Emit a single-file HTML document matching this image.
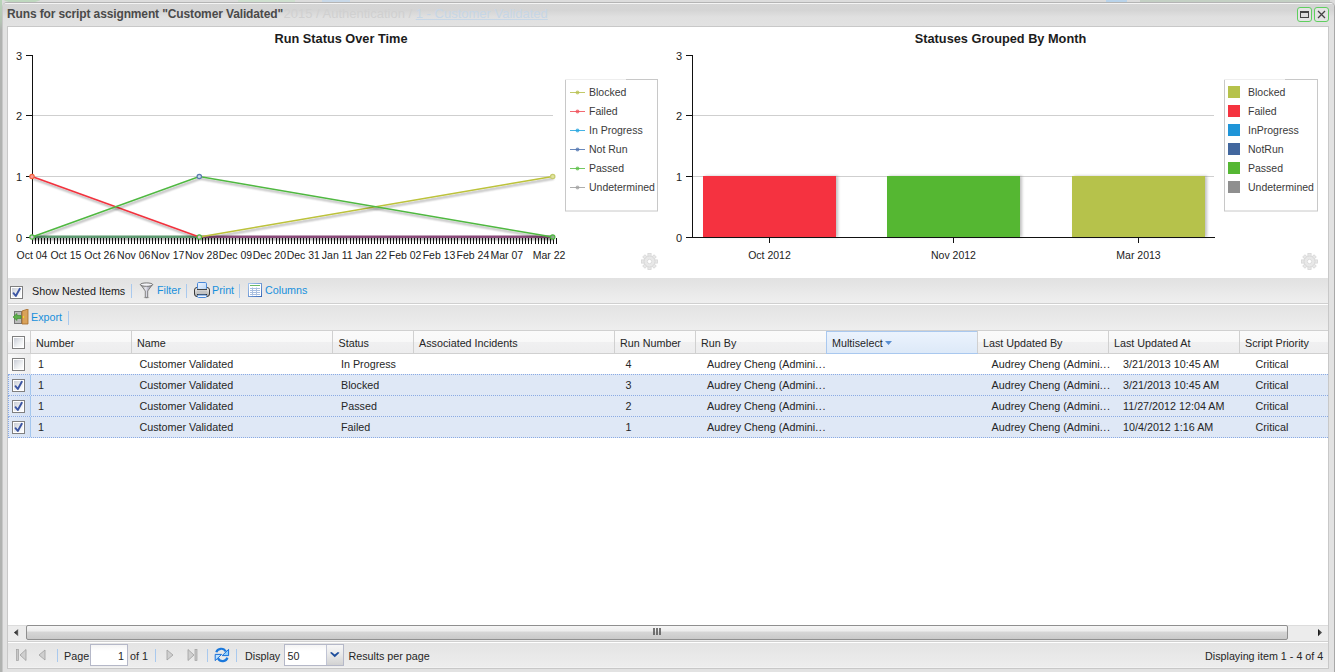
<!DOCTYPE html>
<html><head><meta charset="utf-8">
<style>
*{box-sizing:border-box;margin:0;padding:0}
html,body{width:1335px;height:672px;overflow:hidden;background:#e4e4e4;font-family:"Liberation Sans",sans-serif;font-size:11px;color:#000}
.a{position:absolute;white-space:nowrap}
#bg{left:0;top:0;width:1335px;height:672px;background:#dcdcdc}
#win{left:2px;top:2px;width:1333px;height:670px;background:#e2e2e2;border:1px solid #b4b4b4;border-left-color:#c8c8c8;border-right-color:#a8a8a8;border-bottom:0;border-radius:5px 5px 0 0}
#hdr{left:3px;top:3px;width:1331px;height:24px;background:linear-gradient(#f4f4f4 0,#f4f4f4 1px,#d5d5d5 1px,#d4d4d4 7px,#e0e0e0 14px,#e2e2e2);border-radius:4px 4px 0 0}
#title{left:7px;top:7px;font-weight:bold;font-size:12px;letter-spacing:-0.13px;color:#4a4a4a}
#ghost{left:283.5px;top:6px;font-size:13px;color:#d0d0d0}
#body{left:7px;top:26px;width:1322px;height:643px;background:#fff;border:1px solid #c8c8c8}
.tb{background:linear-gradient(#ededed,#e8e8e8)}
.sep{position:absolute;width:1px;background:#99bbe8;border-right:1px solid #fff}
.lnk{color:#1890dc}
.cb{position:absolute;width:13px;height:13px;border:1px solid #808080;background:linear-gradient(#e0e0e0,#fff)}
.cbc::after{content:"";position:absolute;left:3px;top:0px;width:4px;height:8px;border:solid #2c4fa5;border-width:0 2px 2px 0;transform:rotate(40deg)}
.hd{position:absolute;top:331px;height:22px;border-right:1px solid #d0d0d0;line-height:22px;padding-left:6px;color:#000}
.row{position:absolute;left:8px;width:1320px;height:21px}
.sel{background:#dfe8f6;border-top:1px dotted #a3bae9;border-bottom:1px dotted #a3bae9}
.c{position:absolute;line-height:21px;font-size:10.75px}
</style></head><body>
<div class="a" id="bg"></div>
<div class="a" style="left:0;top:0;width:2px;height:672px;background:#b0b2b0"></div>
<div class="a" style="left:0;top:0;width:2px;height:30px;background:linear-gradient(#b8d4b8,#b4c4b4 70%,#b0b2b0)"></div>
<div class="a" style="left:0px;top:-14px;width:44px;height:18px;border-radius:50%;background:#bfd8bf"></div>
<div class="a" style="left:238px;top:0;width:57px;height:3px;background:#cfe0cf"></div>
<div class="a" style="left:322px;top:0;width:28px;height:3px;background:#c8d8e8"></div>
<div class="a" style="left:1106px;top:0;width:21px;height:3px;background:#b9d3ea"></div>
<div class="a" style="left:1140px;top:0;width:190px;height:3px;background:#c4d0c4"></div>
<div class="a" id="win"></div>
<div class="a" id="hdr"></div>
<div class="a" id="title">Runs for script assignment "Customer Validated"</div>
<div class="a" id="ghost">2015 / Authentication / <span style="color:#c6d6e6;text-decoration:underline">1 - Customer Validated</span></div>
<!-- tool buttons -->
<div class="a" style="left:1297px;top:7px;width:15px;height:15px;border:1px solid #5fcf5f;border-radius:3px;background:#e4e4e4"></div>
<div class="a" style="left:1300px;top:11px;width:9px;height:7px;border:1px solid #444;border-top-width:2px;background:#ddd"></div>
<div class="a" style="left:1314px;top:7px;width:15px;height:15px;border:1px solid #5fcf5f;border-radius:3px;background:#e4e4e4"></div>
<svg class="a" style="left:1314px;top:7px" width="15" height="15"><path d="M4 4L11 11M11 4L4 11" stroke="#444" stroke-width="1.3"/></svg>

<div class="a" id="body"></div>
<svg class="a" id="charts" style="left:0;top:0" width="1335" height="280" font-family="Liberation Sans" font-size="11"><text x="341" y="43" text-anchor="middle" font-weight="bold" font-size="12.75" fill="#1c1c1c">Run Status Over Time</text>
<line x1="32" y1="115.5" x2="553" y2="115.5" stroke="#cfcfcf" stroke-width="1"/>
<line x1="32" y1="176.5" x2="553" y2="176.5" stroke="#cfcfcf" stroke-width="1"/>
<text x="22" y="59.5" text-anchor="end" font-size="11" fill="#222">3</text>
<line x1="26" y1="55.5" x2="32" y2="55.5" stroke="#111" stroke-width="1"/>
<text x="22" y="119.5" text-anchor="end" font-size="11" fill="#222">2</text>
<line x1="26" y1="115.5" x2="32" y2="115.5" stroke="#111" stroke-width="1"/>
<text x="22" y="180.5" text-anchor="end" font-size="11" fill="#222">1</text>
<line x1="26" y1="176.5" x2="32" y2="176.5" stroke="#111" stroke-width="1"/>
<text x="22" y="241.5" text-anchor="end" font-size="11" fill="#222">0</text>
<line x1="26" y1="237.5" x2="32" y2="237.5" stroke="#111" stroke-width="1"/>
<line x1="32.5" y1="55" x2="32.5" y2="238" stroke="#111" stroke-width="1"/>
<path d="M32.5 238V244 M35.5 238V244 M38.5 238V244 M41.5 238V244 M44.5 238V244 M47.5 238V244 M50.5 238V244 M54.5 238V244 M57.5 238V244 M60.5 238V244 M63.5 238V244 M66.5 238V244 M69.5 238V244 M72.5 238V244 M75.5 238V244 M78.5 238V244 M81.5 238V244 M84.5 238V244 M87.5 238V244 M91.5 238V244 M94.5 238V244 M97.5 238V244 M100.5 238V244 M103.5 238V244 M106.5 238V244 M109.5 238V244 M112.5 238V244 M115.5 238V244 M118.5 238V244 M121.5 238V244 M124.5 238V244 M128.5 238V244 M131.5 238V244 M134.5 238V244 M137.5 238V244 M140.5 238V244 M143.5 238V244 M146.5 238V244 M149.5 238V244 M152.5 238V244 M155.5 238V244 M158.5 238V244 M161.5 238V244 M165.5 238V244 M168.5 238V244 M171.5 238V244 M174.5 238V244 M177.5 238V244 M180.5 238V244 M183.5 238V244 M186.5 238V244 M189.5 238V244 M192.5 238V244 M195.5 238V244 M198.5 238V244 M202.5 238V244 M205.5 238V244 M208.5 238V244 M211.5 238V244 M214.5 238V244 M217.5 238V244 M220.5 238V244 M223.5 238V244 M226.5 238V244 M229.5 238V244 M232.5 238V244 M235.5 238V244 M239.5 238V244 M242.5 238V244 M245.5 238V244 M248.5 238V244 M251.5 238V244 M254.5 238V244 M257.5 238V244 M260.5 238V244 M263.5 238V244 M266.5 238V244 M269.5 238V244 M272.5 238V244 M276.5 238V244 M279.5 238V244 M282.5 238V244 M285.5 238V244 M288.5 238V244 M291.5 238V244 M294.5 238V244 M297.5 238V244 M300.5 238V244 M303.5 238V244 M306.5 238V244 M309.5 238V244 M313.5 238V244 M316.5 238V244 M319.5 238V244 M322.5 238V244 M325.5 238V244 M328.5 238V244 M331.5 238V244 M334.5 238V244 M337.5 238V244 M340.5 238V244 M343.5 238V244 M346.5 238V244 M350.5 238V244 M353.5 238V244 M356.5 238V244 M359.5 238V244 M362.5 238V244 M365.5 238V244 M368.5 238V244 M371.5 238V244 M374.5 238V244 M377.5 238V244 M380.5 238V244 M383.5 238V244 M387.5 238V244 M390.5 238V244 M393.5 238V244 M396.5 238V244 M399.5 238V244 M402.5 238V244 M405.5 238V244 M408.5 238V244 M411.5 238V244 M414.5 238V244 M417.5 238V244 M420.5 238V244 M424.5 238V244 M427.5 238V244 M430.5 238V244 M433.5 238V244 M436.5 238V244 M439.5 238V244 M442.5 238V244 M445.5 238V244 M448.5 238V244 M451.5 238V244 M454.5 238V244 M457.5 238V244 M461.5 238V244 M464.5 238V244 M467.5 238V244 M470.5 238V244 M473.5 238V244 M476.5 238V244 M479.5 238V244 M482.5 238V244 M485.5 238V244 M488.5 238V244 M491.5 238V244 M494.5 238V244 M498.5 238V244 M501.5 238V244 M504.5 238V244 M507.5 238V244 M510.5 238V244 M513.5 238V244 M516.5 238V244 M519.5 238V244 M522.5 238V244 M525.5 238V244 M528.5 238V244 M531.5 238V244 M535.5 238V244 M538.5 238V244 M541.5 238V244 M544.5 238V244 M547.5 238V244 M550.5 238V244 M553.5 238V244 M556.5 238V244" stroke="#111" stroke-width="1"/>
<text x="32.0" y="259" text-anchor="middle" font-size="10.5" fill="#222">Oct 04</text>
<text x="65.9" y="259" text-anchor="middle" font-size="10.5" fill="#222">Oct 15</text>
<text x="99.8" y="259" text-anchor="middle" font-size="10.5" fill="#222">Oct 26</text>
<text x="133.7" y="259" text-anchor="middle" font-size="10.5" fill="#222">Nov 06</text>
<text x="167.7" y="259" text-anchor="middle" font-size="10.5" fill="#222">Nov 17</text>
<text x="201.6" y="259" text-anchor="middle" font-size="10.5" fill="#222">Nov 28</text>
<text x="235.5" y="259" text-anchor="middle" font-size="10.5" fill="#222">Dec 09</text>
<text x="269.4" y="259" text-anchor="middle" font-size="10.5" fill="#222">Dec 20</text>
<text x="303.3" y="259" text-anchor="middle" font-size="10.5" fill="#222">Dec 31</text>
<text x="337.2" y="259" text-anchor="middle" font-size="10.5" fill="#222">Jan 11</text>
<text x="371.2" y="259" text-anchor="middle" font-size="10.5" fill="#222">Jan 22</text>
<text x="405.1" y="259" text-anchor="middle" font-size="10.5" fill="#222">Feb 02</text>
<text x="439.0" y="259" text-anchor="middle" font-size="10.5" fill="#222">Feb 13</text>
<text x="472.9" y="259" text-anchor="middle" font-size="10.5" fill="#222">Feb 24</text>
<text x="506.8" y="259" text-anchor="middle" font-size="10.5" fill="#222">Mar 07</text>
<text x="549" y="259" text-anchor="middle" font-size="10.5" fill="#222">Mar 22</text>
<defs><filter id="sh" filterUnits="userSpaceOnUse" x="0" y="30" width="660" height="240"><feGaussianBlur in="SourceAlpha" stdDeviation="0.9"/><feOffset dx="0.5" dy="1.6"/><feComponentTransfer><feFuncA type="linear" slope="0.4"/></feComponentTransfer><feMerge><feMergeNode/><feMergeNode in="SourceGraphic"/></feMerge></filter></defs>
<line x1="32" y1="236.8" x2="199.3" y2="236.8" stroke="#5e9a72" stroke-width="2.4" filter="url(#sh)"/>
<line x1="199.3" y1="236.8" x2="552.7" y2="236.8" stroke="#8a4c7a" stroke-width="2.4" filter="url(#sh)"/>
<polyline points="32,176.5 199.3,237" fill="none" stroke="#f2323e" stroke-width="1.5" filter="url(#sh)"/>
<polyline points="199.3,237 552.7,176.5" fill="none" stroke="#bcc23a" stroke-width="1.5" filter="url(#sh)"/>
<polyline points="32,237 199.3,176.5 552.7,237" fill="none" stroke="#4fb840" stroke-width="1.5" filter="url(#sh)"/>
<circle cx="32" cy="176.5" r="2.2" fill="#f59aa0" stroke="#f2643a" stroke-width="1.2"/>
<circle cx="32" cy="237" r="2.2" fill="#d8c8d8" stroke="#4fb840" stroke-width="1.2"/>
<circle cx="199.3" cy="176.5" r="2.2" fill="#c8d8e8" stroke="#5a7ab0" stroke-width="1.2"/>
<circle cx="199.3" cy="237" r="2.2" fill="#d8c8d8" stroke="#4fb840" stroke-width="1.2"/>
<circle cx="552.7" cy="176.5" r="2.2" fill="#e0e4a0" stroke="#c8cc70" stroke-width="1.2"/>
<circle cx="552.7" cy="237" r="2.2" fill="#90a890" stroke="#4fb840" stroke-width="1.2"/>
<rect x="565.5" y="79.5" width="92" height="131.5" fill="#fff" stroke="#c8c8c8"/><line x1="565" y1="79.5" x2="626" y2="79.5" stroke="#eeeeee"/>
<line x1="570" y1="92.5" x2="585" y2="92.5" stroke="#b8c050" stroke-width="1" opacity="0.85"/><circle cx="577.5" cy="92.5" r="1.9" fill="#b8c050" opacity="0.75"/>
<text x="589" y="95.7" font-size="10.5" fill="#3a3a3a">Blocked</text>
<line x1="570" y1="111.5" x2="585" y2="111.5" stroke="#f0505a" stroke-width="1" opacity="0.85"/><circle cx="577.5" cy="111.5" r="1.9" fill="#f0505a" opacity="0.75"/>
<text x="589" y="114.7" font-size="10.5" fill="#3a3a3a">Failed</text>
<line x1="570" y1="130.5" x2="585" y2="130.5" stroke="#25a6e0" stroke-width="1" opacity="0.85"/><circle cx="577.5" cy="130.5" r="1.9" fill="#25a6e0" opacity="0.75"/>
<text x="589" y="133.7" font-size="10.5" fill="#3a3a3a">In Progress</text>
<line x1="570" y1="149.5" x2="585" y2="149.5" stroke="#4f74b0" stroke-width="1" opacity="0.85"/><circle cx="577.5" cy="149.5" r="1.9" fill="#4f74b0" opacity="0.75"/>
<text x="589" y="152.7" font-size="10.5" fill="#3a3a3a">Not Run</text>
<line x1="570" y1="168.5" x2="585" y2="168.5" stroke="#5cbf48" stroke-width="1" opacity="0.85"/><circle cx="577.5" cy="168.5" r="1.9" fill="#5cbf48" opacity="0.75"/>
<text x="589" y="171.7" font-size="10.5" fill="#3a3a3a">Passed</text>
<line x1="570" y1="187.5" x2="585" y2="187.5" stroke="#a0a0a0" stroke-width="1" opacity="0.85"/><circle cx="577.5" cy="187.5" r="1.9" fill="#a0a0a0" opacity="0.75"/>
<text x="589" y="190.7" font-size="10.5" fill="#3a3a3a">Undetermined</text>
<text x="1000.5" y="43" text-anchor="middle" font-weight="bold" font-size="12.75" fill="#1c1c1c">Statuses Grouped By Month</text>
<line x1="692" y1="115.5" x2="1214" y2="115.5" stroke="#cfcfcf" stroke-width="1"/>
<line x1="692" y1="176.5" x2="1214" y2="176.5" stroke="#cfcfcf" stroke-width="1"/>
<text x="682" y="59.5" text-anchor="end" font-size="11" fill="#222">3</text>
<line x1="686" y1="55.5" x2="692" y2="55.5" stroke="#111" stroke-width="1"/>
<text x="682" y="119.5" text-anchor="end" font-size="11" fill="#222">2</text>
<line x1="686" y1="115.5" x2="692" y2="115.5" stroke="#111" stroke-width="1"/>
<text x="682" y="180.5" text-anchor="end" font-size="11" fill="#222">1</text>
<line x1="686" y1="176.5" x2="692" y2="176.5" stroke="#111" stroke-width="1"/>
<text x="682" y="241.5" text-anchor="end" font-size="11" fill="#222">0</text>
<line x1="686" y1="237.5" x2="692" y2="237.5" stroke="#111" stroke-width="1"/>
<defs><filter id="bs" x="-10%" y="-10%" width="120%" height="120%"><feGaussianBlur in="SourceAlpha" stdDeviation="1.5"/><feOffset dx="1.5" dy="0"/><feComponentTransfer><feFuncA type="linear" slope="0.25"/></feComponentTransfer><feMerge><feMergeNode/><feMergeNode in="SourceGraphic"/></feMerge></filter></defs>
<rect x="703" y="176" width="133" height="61" fill="#f5333f" filter="url(#bs)"/>
<rect x="887" y="176" width="133" height="61" fill="#55b733" filter="url(#bs)"/>
<rect x="1072" y="176" width="133" height="61" fill="#b6c24b" filter="url(#bs)"/>
<line x1="692.5" y1="55" x2="692.5" y2="238" stroke="#111" stroke-width="1"/>
<line x1="692" y1="237.5" x2="1215" y2="237.5" stroke="#111" stroke-width="1"/>
<line x1="769.5" y1="237" x2="769.5" y2="243" stroke="#111" stroke-width="1"/>
<text x="769.5" y="259" text-anchor="middle" font-size="10.5" fill="#222">Oct 2012</text>
<line x1="953.5" y1="237" x2="953.5" y2="243" stroke="#111" stroke-width="1"/>
<text x="953.5" y="259" text-anchor="middle" font-size="10.5" fill="#222">Nov 2012</text>
<line x1="1138.5" y1="237" x2="1138.5" y2="243" stroke="#111" stroke-width="1"/>
<text x="1138.5" y="259" text-anchor="middle" font-size="10.5" fill="#222">Mar 2013</text>
<rect x="1224.5" y="79.5" width="93" height="131.5" fill="#fff" stroke="#c8c8c8"/><line x1="1224" y1="79.5" x2="1285" y2="79.5" stroke="#eeeeee"/>
<rect x="1228" y="86" width="12" height="12" fill="#b6c24b"/>
<text x="1248" y="95.7" font-size="10.5" fill="#3a3a3a">Blocked</text>
<rect x="1228" y="105" width="12" height="12" fill="#f5333f"/>
<text x="1248" y="114.7" font-size="10.5" fill="#3a3a3a">Failed</text>
<rect x="1228" y="124" width="12" height="12" fill="#1f95d8"/>
<text x="1248" y="133.7" font-size="10.5" fill="#3a3a3a">InProgress</text>
<rect x="1228" y="143" width="12" height="12" fill="#42679e"/>
<text x="1248" y="152.7" font-size="10.5" fill="#3a3a3a">NotRun</text>
<rect x="1228" y="162" width="12" height="12" fill="#55b733"/>
<text x="1248" y="171.7" font-size="10.5" fill="#3a3a3a">Passed</text>
<rect x="1228" y="181" width="12" height="12" fill="#8f8f8f"/>
<text x="1248" y="190.7" font-size="10.5" fill="#3a3a3a">Undetermined</text></svg>

<!-- toolbar 1 -->
<div class="a" style="left:8px;top:278px;width:1320px;height:26px;background:linear-gradient(#e1e1e1,#efefef);border-bottom:1px solid #d0d0d0"></div>
<svg class="a" style="left:10px;top:286px" width="13" height="13"><defs><linearGradient id="cbg10286" x1="0" y1="0" x2="1" y2="1"><stop offset="0" stop-color="#c9cdd6"/><stop offset="0.6" stop-color="#eef0f2"/><stop offset="1" stop-color="#ffffff"/></linearGradient></defs><rect x="0.5" y="0.5" width="12" height="12" fill="#fff" stroke="#7f7f7f"/><rect x="2" y="2" width="9" height="9" fill="url(#cbg10286)"/><path d="M3.5 7.2L5.8 10L9.8 2.8" fill="none" stroke="#3b55a3" stroke-width="1.9" stroke-linecap="round" stroke-linejoin="round"/></svg>
<div class="a" style="left:32px;top:285px;font-size:10.75px;line-height:13px;color:#1a1a1a">Show Nested Items</div>
<!-- toolbar 2 -->
<div class="a" style="left:8px;top:304px;width:1320px;height:26px;background:linear-gradient(#e3e3e3,#eeeeee);border-top:1px solid #ffffff"></div>

<!-- grid -->
<div class="a" style="left:8px;top:330px;width:1320px;height:295px;background:#fff"></div>
<div class="a" style="left:8px;top:330px;width:1320px;height:24px;background:linear-gradient(#fafafa,#f8f8f8 48%,#f0f0f1 52%,#ededee);border-top:1px solid #d0d0d0;border-bottom:1px solid #d0d0d0"></div>
<div class="a" style="left:826px;top:331px;width:152px;height:23px;background:linear-gradient(#ebf3fd,#dde9f8);border:1px solid #a9c8ef"></div>
<div class="a" style="left:30px;top:331px;width:1px;height:22px;background:#d0d0d0"></div>
<div class="a" style="left:131px;top:331px;width:1px;height:22px;background:#d0d0d0"></div>
<div class="a" style="left:332px;top:331px;width:1px;height:22px;background:#d0d0d0"></div>
<div class="a" style="left:413px;top:331px;width:1px;height:22px;background:#d0d0d0"></div>
<div class="a" style="left:614px;top:331px;width:1px;height:22px;background:#d0d0d0"></div>
<div class="a" style="left:695px;top:331px;width:1px;height:22px;background:#d0d0d0"></div>
<div class="a" style="left:977px;top:331px;width:1px;height:22px;background:#d0d0d0"></div>
<div class="a" style="left:1108px;top:331px;width:1px;height:22px;background:#d0d0d0"></div>
<div class="a" style="left:1239px;top:331px;width:1px;height:22px;background:#d0d0d0"></div>
<svg class="a" style="left:12px;top:336px" width="13" height="13"><defs><linearGradient id="cbg12336" x1="0" y1="0" x2="1" y2="1"><stop offset="0" stop-color="#c9cdd6"/><stop offset="0.6" stop-color="#eef0f2"/><stop offset="1" stop-color="#ffffff"/></linearGradient></defs><rect x="0.5" y="0.5" width="12" height="12" fill="#fff" stroke="#7f7f7f"/><rect x="2" y="2" width="9" height="9" fill="url(#cbg12336)"/></svg>
<div class="a" style="left:36px;top:337px;font-size:10.75px;line-height:13px;color:#262626">Number</div>
<div class="a" style="left:137px;top:337px;font-size:10.75px;line-height:13px;color:#262626">Name</div>
<div class="a" style="left:338.5px;top:337px;font-size:10.75px;line-height:13px;color:#262626">Status</div>
<div class="a" style="left:419px;top:337px;font-size:10.75px;line-height:13px;color:#262626">Associated Incidents</div>
<div class="a" style="left:620px;top:337px;font-size:10.75px;line-height:13px;color:#262626">Run Number</div>
<div class="a" style="left:701px;top:337px;font-size:10.75px;line-height:13px;color:#262626">Run By</div>
<div class="a" style="left:832px;top:337px;font-size:10.75px;line-height:13px;color:#262626">Multiselect</div>
<div class="a" style="left:983px;top:337px;font-size:10.75px;line-height:13px;color:#262626">Last Updated By</div>
<div class="a" style="left:1114px;top:337px;font-size:10.75px;line-height:13px;color:#262626">Last Updated At</div>
<div class="a" style="left:1245px;top:337px;font-size:10.75px;line-height:13px;color:#262626">Script Priority</div>
<svg class="a" style="left:885px;top:341px" width="8" height="5"><path d="M0 0H7L3.5 4z" fill="#5a8fd0"/></svg>
<div class="a" style="left:8px;top:354px;width:23px;height:20px;background:linear-gradient(90deg,#fafafa,#ececec)"></div>
<svg class="a" style="left:12px;top:358px" width="13" height="13"><defs><linearGradient id="cbg12358" x1="0" y1="0" x2="1" y2="1"><stop offset="0" stop-color="#c9cdd6"/><stop offset="0.6" stop-color="#eef0f2"/><stop offset="1" stop-color="#ffffff"/></linearGradient></defs><rect x="0.5" y="0.5" width="12" height="12" fill="#fff" stroke="#7f7f7f"/><rect x="2" y="2" width="9" height="9" fill="url(#cbg12358)"/></svg>
<div class="a" style="left:38px;top:358px;font-size:10.75px;line-height:13px;color:#262626">1</div>
<div class="a" style="left:139.5px;top:358px;font-size:10.75px;line-height:13px;color:#262626">Customer Validated</div>
<div class="a" style="left:341px;top:358px;font-size:10.75px;line-height:13px;color:#262626">In Progress</div>
<div class="a" style="left:625.5px;top:358px;font-size:10.75px;line-height:13px;color:#262626">4</div>
<div class="a" style="left:707px;top:358px;font-size:10.75px;line-height:13px;color:#262626">Audrey Cheng (Admini<span style="letter-spacing:0.7px">..</span>.</div>
<div class="a" style="left:991.5px;top:358px;font-size:10.75px;line-height:13px;color:#262626">Audrey Cheng (Admini<span style="letter-spacing:0.7px">..</span>.</div>
<div class="a" style="left:1123px;top:358px;font-size:10.75px;line-height:13px;color:#262626">3/21/2013 10:45 AM</div>
<div class="a" style="left:1255.5px;top:358px;font-size:10.75px;line-height:13px;color:#262626">Critical</div>
<div class="a" style="left:8px;top:374px;width:1320px;height:22px;background:#dfe8f6;border:1px dotted #8aaae4;border-right:0"></div>
<div class="a" style="left:9px;top:375px;width:22px;height:20px;background:linear-gradient(90deg,#dfe8f6,#d5e1f2);border-right:1px solid #a3c6ee"></div>
<svg class="a" style="left:12px;top:379px" width="13" height="13"><defs><linearGradient id="cbg12379" x1="0" y1="0" x2="1" y2="1"><stop offset="0" stop-color="#c9cdd6"/><stop offset="0.6" stop-color="#eef0f2"/><stop offset="1" stop-color="#ffffff"/></linearGradient></defs><rect x="0.5" y="0.5" width="12" height="12" fill="#fff" stroke="#7f7f7f"/><rect x="2" y="2" width="9" height="9" fill="url(#cbg12379)"/><path d="M3.5 7.2L5.8 10L9.8 2.8" fill="none" stroke="#3b55a3" stroke-width="1.9" stroke-linecap="round" stroke-linejoin="round"/></svg>
<div class="a" style="left:38px;top:379px;font-size:10.75px;line-height:13px;color:#262626">1</div>
<div class="a" style="left:139.5px;top:379px;font-size:10.75px;line-height:13px;color:#262626">Customer Validated</div>
<div class="a" style="left:341px;top:379px;font-size:10.75px;line-height:13px;color:#262626">Blocked</div>
<div class="a" style="left:625.5px;top:379px;font-size:10.75px;line-height:13px;color:#262626">3</div>
<div class="a" style="left:707px;top:379px;font-size:10.75px;line-height:13px;color:#262626">Audrey Cheng (Admini<span style="letter-spacing:0.7px">..</span>.</div>
<div class="a" style="left:991.5px;top:379px;font-size:10.75px;line-height:13px;color:#262626">Audrey Cheng (Admini<span style="letter-spacing:0.7px">..</span>.</div>
<div class="a" style="left:1123px;top:379px;font-size:10.75px;line-height:13px;color:#262626">3/21/2013 10:45 AM</div>
<div class="a" style="left:1255.5px;top:379px;font-size:10.75px;line-height:13px;color:#262626">Critical</div>
<div class="a" style="left:8px;top:395px;width:1320px;height:22px;background:#dfe8f6;border:1px dotted #8aaae4;border-right:0"></div>
<div class="a" style="left:9px;top:396px;width:22px;height:20px;background:linear-gradient(90deg,#dfe8f6,#d5e1f2);border-right:1px solid #a3c6ee"></div>
<svg class="a" style="left:12px;top:400px" width="13" height="13"><defs><linearGradient id="cbg12400" x1="0" y1="0" x2="1" y2="1"><stop offset="0" stop-color="#c9cdd6"/><stop offset="0.6" stop-color="#eef0f2"/><stop offset="1" stop-color="#ffffff"/></linearGradient></defs><rect x="0.5" y="0.5" width="12" height="12" fill="#fff" stroke="#7f7f7f"/><rect x="2" y="2" width="9" height="9" fill="url(#cbg12400)"/><path d="M3.5 7.2L5.8 10L9.8 2.8" fill="none" stroke="#3b55a3" stroke-width="1.9" stroke-linecap="round" stroke-linejoin="round"/></svg>
<div class="a" style="left:38px;top:400px;font-size:10.75px;line-height:13px;color:#262626">1</div>
<div class="a" style="left:139.5px;top:400px;font-size:10.75px;line-height:13px;color:#262626">Customer Validated</div>
<div class="a" style="left:341px;top:400px;font-size:10.75px;line-height:13px;color:#262626">Passed</div>
<div class="a" style="left:625.5px;top:400px;font-size:10.75px;line-height:13px;color:#262626">2</div>
<div class="a" style="left:707px;top:400px;font-size:10.75px;line-height:13px;color:#262626">Audrey Cheng (Admini<span style="letter-spacing:0.7px">..</span>.</div>
<div class="a" style="left:991.5px;top:400px;font-size:10.75px;line-height:13px;color:#262626">Audrey Cheng (Admini<span style="letter-spacing:0.7px">..</span>.</div>
<div class="a" style="left:1123px;top:400px;font-size:10.75px;line-height:13px;color:#262626">11/27/2012 12:04 AM</div>
<div class="a" style="left:1255.5px;top:400px;font-size:10.75px;line-height:13px;color:#262626">Critical</div>
<div class="a" style="left:8px;top:416px;width:1320px;height:22px;background:#dfe8f6;border:1px dotted #8aaae4;border-right:0"></div>
<div class="a" style="left:9px;top:417px;width:22px;height:20px;background:linear-gradient(90deg,#dfe8f6,#d5e1f2);border-right:1px solid #a3c6ee"></div>
<svg class="a" style="left:12px;top:421px" width="13" height="13"><defs><linearGradient id="cbg12421" x1="0" y1="0" x2="1" y2="1"><stop offset="0" stop-color="#c9cdd6"/><stop offset="0.6" stop-color="#eef0f2"/><stop offset="1" stop-color="#ffffff"/></linearGradient></defs><rect x="0.5" y="0.5" width="12" height="12" fill="#fff" stroke="#7f7f7f"/><rect x="2" y="2" width="9" height="9" fill="url(#cbg12421)"/><path d="M3.5 7.2L5.8 10L9.8 2.8" fill="none" stroke="#3b55a3" stroke-width="1.9" stroke-linecap="round" stroke-linejoin="round"/></svg>
<div class="a" style="left:38px;top:421px;font-size:10.75px;line-height:13px;color:#262626">1</div>
<div class="a" style="left:139.5px;top:421px;font-size:10.75px;line-height:13px;color:#262626">Customer Validated</div>
<div class="a" style="left:341px;top:421px;font-size:10.75px;line-height:13px;color:#262626">Failed</div>
<div class="a" style="left:625.5px;top:421px;font-size:10.75px;line-height:13px;color:#262626">1</div>
<div class="a" style="left:707px;top:421px;font-size:10.75px;line-height:13px;color:#262626">Audrey Cheng (Admini<span style="letter-spacing:0.7px">..</span>.</div>
<div class="a" style="left:991.5px;top:421px;font-size:10.75px;line-height:13px;color:#262626">Audrey Cheng (Admini<span style="letter-spacing:0.7px">..</span>.</div>
<div class="a" style="left:1123px;top:421px;font-size:10.75px;line-height:13px;color:#262626">10/4/2012 1:16 AM</div>
<div class="a" style="left:1255.5px;top:421px;font-size:10.75px;line-height:13px;color:#262626">Critical</div>

<div class="a" style="left:131px;top:284px;width:1px;height:14px;background:#a9c9ee"></div>
<svg class="a" style="left:139px;top:282px" width="16" height="17"><defs><linearGradient id="fg" x1="0" x2="1"><stop offset="0" stop-color="#9a9a9a"/><stop offset=".45" stop-color="#e8e8ee"/><stop offset=".55" stop-color="#c8c8d8"/><stop offset="1" stop-color="#8a8a8a"/></linearGradient></defs><path d="M1.5 2.5L6.3 9V15.5H8.7V9L13.5 2.5Z" fill="url(#fg)" stroke="#777" stroke-width="0.9"/><ellipse cx="7.5" cy="2.6" rx="6.2" ry="1.7" fill="#f4f4f8" stroke="#6a6a6a" stroke-width="0.9"/><ellipse cx="7.5" cy="15.6" rx="3" ry="0.8" fill="#888" opacity="0.5"/></svg>
<div class="a lnk" style="left:157px;top:284px;font-size:10.75px;line-height:13px">Filter</div>
<div class="a" style="left:186px;top:284px;width:1px;height:14px;background:#a9c9ee"></div>
<svg class="a" style="left:194px;top:282px" width="17" height="17"><defs><linearGradient id="pg" x1="0" y1="0" x2="0" y2="1"><stop offset="0" stop-color="#f4f4f4"/><stop offset="1" stop-color="#a8a8a8"/></linearGradient><linearGradient id="pp" x1="0" y1="0" x2="1" y2="1"><stop offset="0" stop-color="#f0f6ff"/><stop offset="1" stop-color="#b8d4f4"/></linearGradient></defs><rect x="0.5" y="5.5" width="15" height="9" rx="2.5" fill="url(#pg)" stroke="#3a3a3a"/><rect x="3.5" y="0.5" width="9" height="7" rx="1.2" fill="url(#pp)" stroke="#4a88d8"/><path d="M3 7.5H13" stroke="#444"/><rect x="3" y="8.5" width="10" height="3" fill="#c4c4c4"/><path d="M3 12.5H13" stroke="#333"/><rect x="3.5" y="13" width="9" height="2.5" rx="1" fill="#eef4fc" stroke="#4a88d8"/></svg>
<div class="a lnk" style="left:212px;top:284px;font-size:10.75px;line-height:13px">Print</div>
<div class="a" style="left:239px;top:284px;width:1px;height:14px;background:#a9c9ee"></div>
<svg class="a" style="left:248px;top:283px" width="14" height="14"><defs><linearGradient id="cg" x1="0" y1="0" x2="1" y2="1"><stop offset="0" stop-color="#a8c8f0"/><stop offset="1" stop-color="#3a6ab8"/></linearGradient></defs><rect x="0.5" y="0.5" width="13" height="13" fill="#fff" stroke="url(#cg)"/><path d="M2 2.5H12" stroke="#6ab868" stroke-width="1"/><path d="M2 5.5H12M2 7.5H12M2 9.5H12M2 11.5H12M4.5 4.5V12.5M8.5 4.5V12.5" stroke="#a9bfe0" stroke-width="1"/></svg>
<div class="a lnk" style="left:265px;top:284px;font-size:10.75px;line-height:13px">Columns</div>
<svg class="a" style="left:13px;top:309px" width="16" height="16"><rect x="1" y="2" width="8" height="13" fill="#777"/><rect x="2" y="3" width="6" height="11" fill="#bbb"/><path d="M9 2L15 0V15L9 15Z" fill="#d9a25a" stroke="#a56a2a" stroke-width="0.8"/><circle cx="10.5" cy="8" r="0.7" fill="#ff0"/><path d="M0 8L4 4.5V6.5H8V9.5H4V11.5Z" fill="#5db04a" stroke="#3a8a2a" stroke-width="0.6"/></svg>
<div class="a lnk" style="left:31px;top:311px;font-size:10.75px;line-height:13px">Export</div>
<div class="a" style="left:68px;top:311px;width:1px;height:14px;background:#a9c9ee"></div>
<div class="a" style="left:8px;top:625px;width:1320px;height:17px;background:#ececec;border-top:1px solid #dcdcdc;border-bottom:1px solid #d0d0d0"></div>
<svg class="a" style="left:14px;top:629px" width="5" height="8"><defs><linearGradient id="la" x1="0" x2="1"><stop offset="0" stop-color="#111"/><stop offset="1" stop-color="#666"/></linearGradient></defs><path d="M4.2 0V7.2L0 3.6Z" fill="url(#la)"/></svg>
<svg class="a" style="left:1318px;top:629px" width="5" height="8"><defs><linearGradient id="ra" x1="0" x2="1"><stop offset="0" stop-color="#111"/><stop offset="1" stop-color="#777"/></linearGradient></defs><path d="M0 0V7.2L4.2 3.6Z" fill="url(#ra)"/></svg>
<div class="a" style="left:26px;top:625px;width:1262px;height:15px;border:1px solid #8f8f8f;border-radius:2px;background:linear-gradient(#f6f6f6,#ececec 40%,#d6d6d6 45%,#c9c9c9)"></div>
<svg class="a" style="left:653px;top:627px" width="9" height="9"><path d="M1 1V8M4 1V8M7 1V8" stroke="#555" stroke-width="1.6"/></svg>
<div class="a" style="left:8px;top:642px;width:1320px;height:26px;background:linear-gradient(#e4e4e4,#ededed);border-top:1px solid #ffffff;border-bottom:1px solid #f2f2f2"></div>
<svg class="a" style="left:16px;top:649px" width="11" height="12"><rect x="0.5" y="0.5" width="2" height="11" fill="#c8c8c8" stroke="#a0a0a0" stroke-width="0.7"/><path d="M10 0.5V11.5L4 6Z" fill="#cfcfcf" stroke="#a0a0a0" stroke-width="0.8"/></svg>
<svg class="a" style="left:38px;top:649px" width="8" height="12"><path d="M7 1V11L1 6Z" fill="#cfcfcf" stroke="#a0a0a0" stroke-width="0.8"/></svg>
<div class="a" style="left:57px;top:649px;width:1px;height:13px;background:#a9c9ee"></div>
<div class="a" style="left:64px;top:650px;font-size:10.75px;line-height:13px;color:#262626">Page</div>
<div class="a" style="left:90px;top:644px;width:38px;height:22px;border:1px solid #b5b8c8;background:linear-gradient(#f4f4f4,#fff 30%)"></div>
<div class="a" style="left:118px;top:650px;font-size:10.75px;line-height:13px;color:#262626">1</div>
<div class="a" style="left:130px;top:650px;font-size:10.75px;line-height:13px;color:#262626">of 1</div>
<div class="a" style="left:155px;top:649px;width:1px;height:13px;background:#a9c9ee"></div>
<svg class="a" style="left:166px;top:649px" width="8" height="12"><path d="M1 1V11L7 6Z" fill="#cfcfcf" stroke="#a0a0a0" stroke-width="0.8"/></svg>
<svg class="a" style="left:187px;top:649px" width="11" height="12"><path d="M1 0.5V11.5L7 6Z" fill="#cfcfcf" stroke="#a0a0a0" stroke-width="0.8"/><rect x="8" y="0.5" width="2" height="11" fill="#c8c8c8" stroke="#a0a0a0" stroke-width="0.7"/></svg>
<div class="a" style="left:207px;top:649px;width:1px;height:13px;background:#a9c9ee"></div>
<svg class="a" style="left:214px;top:647px" width="16" height="16"><path d="M2.3 5.2C3.5 1.2 9.5 0.3 11.8 4.6" fill="none" stroke="#1a78dc" stroke-width="2.2"/><path d="M8.2 8.6H14.6V2.4Z" fill="#8fd0ff" stroke="#1a6fd8" stroke-width="1" stroke-linejoin="round"/><path d="M13.4 10.6C12.3 14.6 6.5 15.6 4 11.4" fill="none" stroke="#1a78dc" stroke-width="2.2"/><path d="M7.6 7.4H1.2V13.6Z" fill="#bfe4ff" stroke="#1a6fd8" stroke-width="1" stroke-linejoin="round"/></svg>
<div class="a" style="left:236px;top:649px;width:1px;height:13px;background:#a9c9ee"></div>
<div class="a" style="left:245px;top:650px;font-size:10.75px;line-height:13px;color:#262626">Display</div>
<div class="a" style="left:284px;top:644px;width:60px;height:22px;border:1px solid #b5b8c8;background:linear-gradient(#f4f4f4,#fff 30%)"></div>
<div class="a" style="left:287.5px;top:650px;font-size:10.75px;line-height:13px;color:#262626">50</div>
<div class="a" style="left:326px;top:645px;width:17px;height:20px;background:linear-gradient(#f6f6f6,#ececec 40%,#d2d2d2);border-left:1px solid #c0c4d4"></div>
<svg class="a" style="left:330px;top:652px" width="10" height="7"><path d="M0 0.8L1.6 0L4.75 2.4L7.9 0L9.5 0.8L4.75 5.2Z" fill="#1f4e9c"/></svg>
<div class="a" style="left:348.5px;top:650px;font-size:10.75px;line-height:13px;color:#262626">Results per page</div>
<div class="a" style="left:1205px;top:650px;font-size:10.75px;line-height:13px;color:#262626">Displaying item 1 - 4 of 4</div>
<svg class="a" style="left:641px;top:253px" width="17" height="17"><g transform="translate(8.5 8.5)" fill="#e8e8e8" stroke="#d6d6d6" stroke-width="0.8"><rect x="-1.6" y="-8" width="3.2" height="16" transform="rotate(0)"/><rect x="-1.6" y="-8" width="3.2" height="16" transform="rotate(45)"/><rect x="-1.6" y="-8" width="3.2" height="16" transform="rotate(90)"/><rect x="-1.6" y="-8" width="3.2" height="16" transform="rotate(135)"/><circle r="5.5"/></g><circle cx="8.5" cy="8.5" r="2.2" fill="#fff" stroke="#d6d6d6" stroke-width="0.8"/></svg>
<svg class="a" style="left:1301px;top:253px" width="17" height="17"><g transform="translate(8.5 8.5)" fill="#e8e8e8" stroke="#d6d6d6" stroke-width="0.8"><rect x="-1.6" y="-8" width="3.2" height="16" transform="rotate(0)"/><rect x="-1.6" y="-8" width="3.2" height="16" transform="rotate(45)"/><rect x="-1.6" y="-8" width="3.2" height="16" transform="rotate(90)"/><rect x="-1.6" y="-8" width="3.2" height="16" transform="rotate(135)"/><circle r="5.5"/></g><circle cx="8.5" cy="8.5" r="2.2" fill="#fff" stroke="#d6d6d6" stroke-width="0.8"/></svg>
</body></html>
